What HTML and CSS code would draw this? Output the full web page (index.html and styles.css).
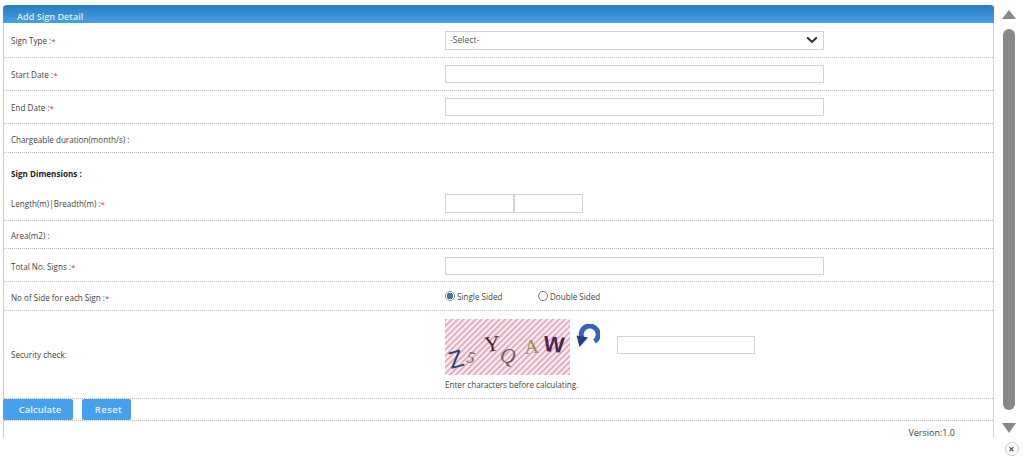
FILE: index.html
```html
<!DOCTYPE html>
<html lang="en">
<head>
<meta charset="utf-8">
<title>Add Sign Detail</title>
<link rel="stylesheet" href="styles.css">
</head>
<body>
<div class="page">
  <main class="panel">
    <h1 class="panel-title">Add Sign Detail</h1>
    <form class="form">
      <div class="row h35"><label class="label">Sign Type :<span class="req">*</span></label>
        <div class="field"><div class="select"><span>-Select-</span>
          <svg class="chev" viewBox="0 0 12 8" width="12" height="8"><path d="M1.2 1.5 6 6 10.8 1.5" fill="none" stroke="#2b2b33" stroke-width="2"/></svg></div></div></div>
      <div class="row h33"><label class="label">Start Date :<span class="req">*</span></label><div class="field"><input class="input" type="text"></div></div>
      <div class="row h33"><label class="label">End Date :<span class="req">*</span></label><div class="field"><input class="input" type="text"></div></div>
      <div class="row h29"><label class="label nudge">Chargeable duration(month/s) :</label></div>
      <div class="row h35 plain"><strong class="label strong">Sign Dimensions :</strong></div>
      <div class="row h33"><label class="label lift">Length(m)|Breadth(m) :<span class="req">*</span></label>
        <div class="field lift"><input class="input small" type="text"><input class="input small" type="text"></div></div>
      <div class="row h28"><label class="label nudge">Area(m2) :</label></div>
      <div class="row h33"><label class="label nudge">Total No. Signs :<span class="req">*</span></label><div class="field nudge"><input class="input" type="text"></div></div>
      <div class="row h29"><label class="label nudge">No of Side for each Sign :<span class="req">*</span></label>
        <div class="field radios">
          <span class="radio-item single"><span class="radio on"></span>Single Sided</span>
          <span class="radio-item"><span class="radio"></span>Double Sided</span>
        </div></div>
      <div class="row h88"><label class="label">Security check:</label>
        <div class="field captcha-field">
          <div class="captcha-top">
            <svg class="captcha" width="125" height="56" viewBox="0 0 125 56">
              <defs><pattern id="st" width="4.200" height="4.200" patternUnits="userSpaceOnUse" patternTransform="rotate(45)"><rect width="4.200" height="4.200" fill="#f8eff2"/><rect width="1.900" height="4.200" fill="#e6a9bb"/></pattern></defs>
              <rect width="125" height="56" fill="url(#st)"/>
              <text class="c c1" transform="translate(6 50) rotate(-15)">Z</text>
              <text class="c c2" transform="translate(21 43) rotate(10)">5</text>
              <text class="c c3" transform="translate(40 33) rotate(-6)">Y</text>
              <text class="c c4" transform="translate(54 42) rotate(12)">Q</text>
              <text class="c c5" transform="translate(80 35) rotate(-6)">A</text>
              <text class="c c6" transform="translate(98 32) rotate(5)">W</text>
            </svg>
            <svg class="refresh" width="24" height="24" viewBox="0 0 24 24"><path d="M6.500 15A8.500 8.500 0 1 1 18.500 17.500" fill="none" stroke="#3466b2" stroke-width="5"/><path d="M0.500 11.500 12 13.500 3.500 23Z" fill="#223f88"/></svg>
            <input class="input code" type="text">
          </div>
          <p class="hint">Enter characters before calculating.</p>
        </div></div>
      <div class="row actions"><button class="btn calc" type="button">Calculate</button><button class="btn reset" type="button">Reset</button></div>
      <div class="version">Version:1.0</div>
    </form>
  </main>
  <aside class="scroll">
    <div class="arrow up"></div>
    <div class="thumb"></div>
    <div class="arrow down"></div>
    <div class="close">&#215;</div>
  </aside>
</div>
</body>
</html>
```
FILE: styles.css
```css
* { box-sizing: border-box; }
html, body { margin: 0; height: 100%; background: #fff; overflow: hidden; }
body { font-family: "Open Sans", "Liberation Sans", sans-serif; font-size: 8.100px; color: #333; }
.page { display: flex; height: 462px; padding: 5px 0 0 3px; align-items: flex-start; }
.panel { width: 991px; height: 433px; border-left: 1px solid #cfcfcf; border-right: 1px solid #d6d6d6; flex: none; }
.panel-title { margin: 0 -1px; height: 18px; background: linear-gradient(#2a7cc0, #46a0ea); border-radius: 4px 4px 0 0; color: #dcefff; font-size: 9.100px; font-weight: 600; line-height: 24px; padding-left: 14px; overflow: hidden; }
.form { display: flex; flex-direction: column; }
.row { display: flex; align-items: center; border-bottom: 1px dotted #bdbdbd; }
.row.plain { border-bottom: 0; align-items: flex-start; padding-top: 15px; }
.h35 { height: 35px; }
.h33 { height: 33px; }
.h29 { height: 29px; }
.h28 { height: 28px; }
.h88 { height: 88px; }
.label { width: 441px; flex: none; padding-left: 7px; color: #444; }
.nudge { padding-top: 2px; }
.lift { padding-bottom: 2px; }
.strong { font-weight: 700; color: #222; }
.req { color: #d8323c; font-size: 8px; }
.field { display: flex; align-items: center; }
.input { width: 379px; height: 18px; border: 1px solid #d4d4d4; background: #fff; padding: 0 4px; margin: 0; outline: 0; border-radius: 0; display: block; }
.input.small { width: 69px; height: 19px; }
.select { width: 379px; height: 19px; border: 1px solid #d4d4d4; display: flex; justify-content: space-between; align-items: center; padding: 0 5px 0 4px; color: #555; font-size: 8.600px; }
.chev { display: block; }
.radios { color: #444; }
.radio-item { display: flex; align-items: center; gap: 1px; }
.radio-item.single { width: 93px; }
.radio { width: 10px; height: 10px; border: 1px solid #777; border-radius: 50%; background: #fff; flex: none; margin-right: 1px; }
.radio.on { border-color: #7d9cb8; background: radial-gradient(circle, #4f7396 0 3px, #fff 3.500px); }
.captcha-field { flex-direction: column; align-items: flex-start; }
.captcha-top { display: flex; align-items: flex-start; }
.captcha { display: block; flex: none; }
.refresh { margin: 5px 0 0 6px; flex: none; }
.code { width: 138px; margin: 17px 0 0 17px; height: 18px; }
.hint { margin: 4px 0 0; color: #444; }
.c { font-family: "Liberation Serif", serif; font-size: 20px; }
.c1 { fill: #2f3f78; font-family: "Liberation Sans", sans-serif; font-size: 24px; }
.c2 { fill: #75607a; font-size: 16px; font-style: italic; }
.c3 { fill: #4d2630; font-size: 22px; }
.c4 { fill: #6d5a68; font-style: italic; font-size: 21px; }
.c5 { fill: #8f8f4a; font-size: 20px; }
.c6 { fill: #4b2650; font-size: 22px; font-weight: 700; font-family: "Liberation Sans", sans-serif; }
.actions { height: 22px; gap: 9px; margin-left: -1px; align-items: stretch; }
.btn { border: 0; background: #46a0ee; color: #e8f4ff; border-radius: 2px; font: 600 9.500px "Open Sans", sans-serif; padding: 0 0 0 4px; }
.calc { width: 70px; }
.reset { width: 49px; letter-spacing: .4px; }
.version { text-align: right; padding: 5px 38px 0 0; color: #444; font-size: 9px; }
.scroll { width: 30px; flex: none; position: relative; display: flex; flex-direction: column; align-items: center; padding-top: 5px; }
.arrow { width: 0; height: 0; border-left: 7px solid transparent; border-right: 7px solid transparent; }
.up { border-bottom: 9px solid #888; }
.down { border-top: 10px solid #888; margin-top: 13px; }
.thumb { width: 12px; height: 381px; background: #888; border-radius: 6px; margin-top: 10px; }
.close { width: 14px; height: 14px; border: 1px solid #ccc; border-radius: 50%; color: #555; font-size: 11px; line-height: 12px; text-align: center; margin: 9px 0 0 5px; font-weight: 700; }
```
